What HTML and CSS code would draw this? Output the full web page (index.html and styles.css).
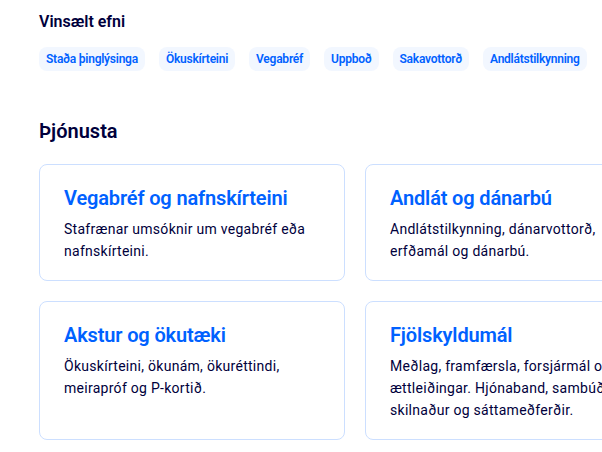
FILE: index.html
```html
<!DOCTYPE html>
<html lang="is">
<head>
<meta charset="utf-8">
<link rel="stylesheet" href="styles.css">
</head>
<body>
<main class="page">
  <section class="popular">
    <h2 class="section-title">Vinsælt efni</h2>
    <ul class="tags">
      <li class="tag">Staða þinglýsinga</li>
      <li class="tag">Ökuskírteini</li>
      <li class="tag">Vegabréf</li>
      <li class="tag">Uppboð</li>
      <li class="tag">Sakavottorð</li>
      <li class="tag">Andlátstilkynning</li>
    </ul>
  </section>
  <section class="services">
    <h2 class="section-title services-title">Þjónusta</h2>
    <div class="cards">
      <article class="card">
        <h3 class="card-title">Vegabréf og nafnskírteini</h3>
        <p class="card-text">Stafrænar umsóknir um vegabréf eða nafnskírteini.</p>
      </article>
      <article class="card">
        <h3 class="card-title">Andlát og dánarbú</h3>
        <p class="card-text">Andlátstilkynning, dánarvottorð, erfðamál og dánarbú.</p>
      </article>
      <article class="card">
        <h3 class="card-title">Akstur og ökutæki</h3>
        <p class="card-text">Ökuskírteini, ökunám, ökuréttindi, meirapróf og P-kortið.</p>
      </article>
      <article class="card">
        <h3 class="card-title">Fjölskyldumál</h3>
        <p class="card-text">Meðlag, framfærsla, forsjármál og ættleiðingar. Hjónaband, sambúð, skilnaður og sáttameðferðir.</p>
      </article>
    </div>
  </section>
</main>
</body>
</html>
```

FILE: styles.css
```css
* { box-sizing: border-box; }
html, body {
  margin: 0;
  padding: 0;
  background: #ffffff;
  overflow: hidden;
}
body {
  font-family: Roboto, "Noto Sans", sans-serif;
  color: #00003c;
  width: 602px;
  height: 452px;
}
.page {
  padding: 10px 0 0 39px;
}
.section-title {
  margin: 0;
  font-size: 16px;
  line-height: 24px;
  font-weight: 600;
  color: #00003c;
}
.tags {
  list-style: none;
  margin: 13px 0 0;
  padding: 0;
  display: flex;
  gap: 14px;
  white-space: nowrap;
}
.tag {
  height: 24px;
  line-height: 24px;
  padding: 0 7px;
  border-radius: 8px;
  background: #f2f7ff;
  color: #0061ff;
  font-size: 12px;
  font-weight: 600;
  letter-spacing: -0.24px;
}
.services {
  margin-top: 46px;
}
.services-title {
  font-size: 20px;
  line-height: 28px;
}
.cards {
  margin-top: 19px;
  display: grid;
  grid-template-columns: 306px 306px;
  gap: 20px;
}
.card {
  border: 1px solid #ccdfff;
  border-radius: 8px;
  padding: 20px 24px 18px;
}
.card-title {
  margin: 0;
  font-size: 20px;
  line-height: 26px;
  font-weight: 600;
  letter-spacing: -0.15px;
  color: #0061ff;
}
.card-text {
  margin: 7px 0 0;
  font-size: 14px;
  line-height: 22px;
  letter-spacing: 0.28px;
  color: #00003c;
}
```
